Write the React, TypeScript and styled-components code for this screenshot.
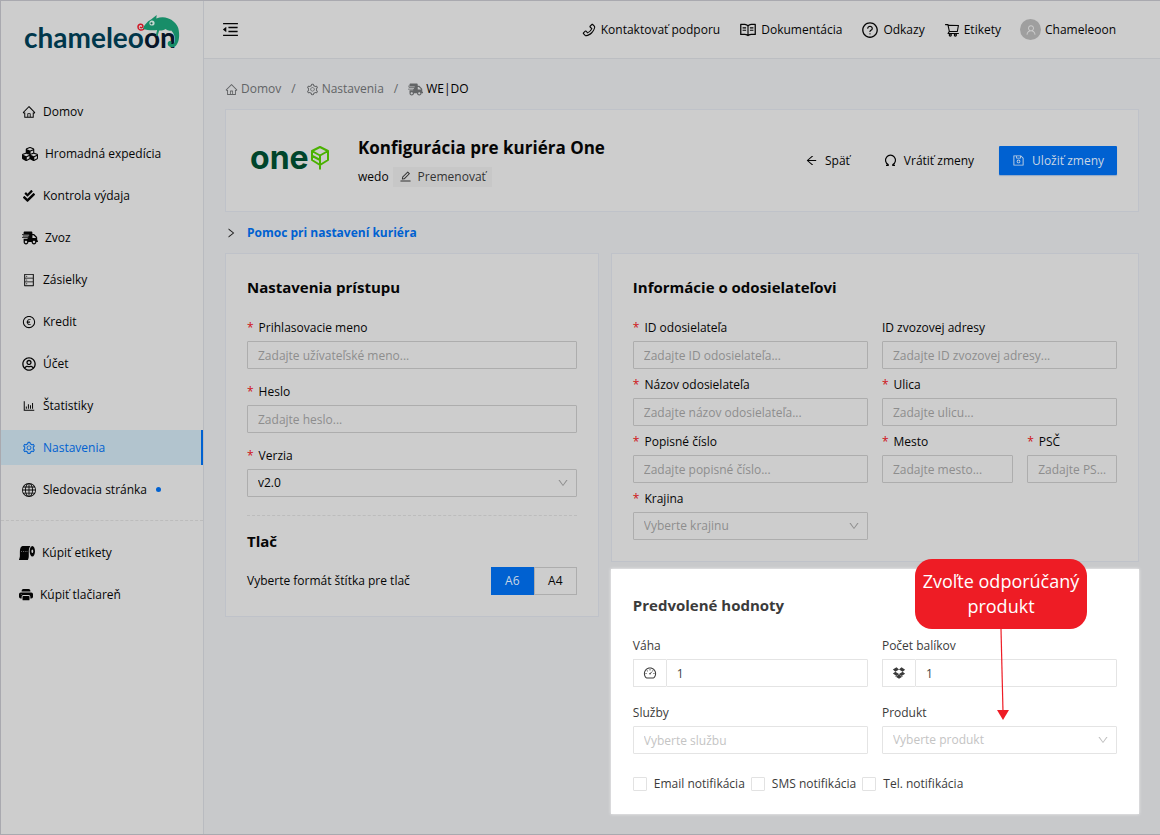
import React from 'react';
import styled, { createGlobalStyle, css } from 'styled-components';
import {
  AiOutlineHome, AiOutlineSetting, AiOutlineMenuFold, AiOutlineArrowLeft, AiOutlineSave,
  AiOutlineEdit, AiOutlineDatabase, AiOutlineEuro, AiOutlineBarChart, AiOutlinePhone,
  AiOutlineRead, AiOutlineQuestionCircle, AiOutlineShoppingCart, AiOutlineUser,
  AiOutlineDashboard, AiOutlineDropbox, AiOutlineDown, AiOutlineRight,
} from 'react-icons/ai';
import { FaCubes, FaShippingFast, FaCheckDouble, FaRegUserCircle, FaToiletPaper } from 'react-icons/fa';
import { BsGlobe, BsPrinterFill } from 'react-icons/bs';

const c = {
  page: '#c8c9cb',
  panel: '#cdcdcd',
  line: '#bfc2c9',
  inputLine: '#adadad',
  blue: '#0061d1',
  text: '#050505',
  muted: '#8d8d8d',
};

const GlobalStyle = createGlobalStyle`
  *, *::before, *::after { box-sizing: border-box; }
  body { margin: 0; background: ${c.page}; }
  body, button, input, select {
    font-family: "Open Sans", "Noto Sans", sans-serif;
    font-size: 12px;
    line-height: 20px;
    color: ${c.text};
  }
  svg { display: block; flex: none; }
  a { color: inherit; text-decoration: none; }
`;

const Page = styled.div`
  display: flex;
  min-height: 100vh;
  border: 1px solid #a9a9af;
  border-right: 0;
`;

const Sidebar = styled.aside`
  flex: none;
  width: 203px;
  background: ${c.panel};
  border-right: 1px solid #b9bbc0;
`;

const Brand = styled.a`
  display: block;
  height: 93px;
  padding: 10px 0 0 22px;
`;

const Menu = styled.nav`
  display: flex;
  flex-direction: column;
  gap: 7px;
`;

const MenuLink = styled.a<{ $active?: boolean; $inset?: number; $icon?: number }>`
  display: flex;
  align-items: center;
  gap: 7px;
  height: 35px;
  padding-left: ${p => p.$inset ?? 21}px;
  svg { min-width: 14px; font-size: ${p => p.$icon ?? 14}px; }
  ${p => p.$active && css`
    color: ${c.blue};
    background: #b2c4ce;
    border-right: 2px solid ${c.blue};
  `}
`;

const Dot = styled.span`
  width: 5px;
  height: 5px;
  margin-left: 2px;
  border-radius: 50%;
  background: ${c.blue};
`;

const DashedLine = styled.hr<{ $space: string }>`
  height: 0;
  margin: ${p => p.$space};
  border: 0;
  border-top: 1px dashed #bcbcbc;
`;

const Main = styled.div`
  flex: 1;
  min-width: 0;
`;

const TopBar = styled.header`
  display: flex;
  align-items: center;
  justify-content: space-between;
  height: 58px;
  padding: 0 44px 0 17px;
  background: ${c.panel};
  border-bottom: 1px solid #bcbec2;
`;

const IconButton = styled.button`
  padding: 0;
  border: 0;
  background: none;
  font-size: 19px;
`;

const TopLinks = styled.nav`
  display: flex;
  align-items: center;
  gap: 19px;
`;

const TopLink = styled.a<{ $icon?: number }>`
  display: flex;
  align-items: center;
  gap: 4px;
  svg { font-size: ${p => p.$icon ?? 18}px; }
`;

const Avatar = styled.span`
  display: grid;
  place-items: center;
  width: 21px;
  height: 21px;
  border-radius: 50%;
  color: ${c.panel};
  background: #9f9f9f;
`;

const Content = styled.main`
  padding: 20px 21px;
`;

const Crumbs = styled.nav`
  display: flex;
  gap: 10px;
  margin-bottom: 10px;
  color: #626466;
`;

const Crumb = styled.a<{ $current?: boolean }>`
  display: flex;
  align-items: center;
  gap: 3px;
  svg { font-size: ${p => (p.$current ? 15 : 13)}px; }
  span { color: ${p => (p.$current ? '#000' : 'inherit')}; }
`;

const Card = styled.section<{ $bright?: boolean }>`
  position: relative;
  padding: 21px;
  background: ${c.panel};
  border: 1px solid ${c.line};
  ${p => p.$bright && css`
    margin-top: 7px;
    padding: 23px 21px 19px;
    color: #3b3b3b;
    background: #fff;
    border-color: #fff;
    box-shadow: 0 0 3px #f4f4f4;
  `}
`;

const HeadCard = styled(Card)`
  display: flex;
  align-items: center;
  min-height: 103px;
  padding: 0 21px 0 24px;
`;

const CourierInfo = styled.div`
  flex: 1;
  margin-left: 28px;
`;

const Heading = styled.h1`
  margin: 0 0 6px;
  font-size: 17px;
  font-weight: 700;
  line-height: 26px;
`;

const NameRow = styled.div`
  display: flex;
  align-items: center;
  gap: 4px;
`;

const RenameButton = styled.button`
  display: flex;
  align-items: center;
  gap: 6px;
  height: 20px;
  padding: 0 6px;
  border: 0;
  color: #333;
  background: #c7c7c7;
  svg { font-size: 13px; }
`;

const Actions = styled.div`
  display: flex;
  align-items: center;
  gap: 8px;
`;

const Button = styled.button<{ $primary?: boolean }>`
  display: flex;
  align-items: center;
  gap: 7px;
  height: 29px;
  padding: 0 13px;
  border: 0;
  border-radius: 1px;
  background: none;
  svg { font-size: 13px; }
  ${p => p.$primary && css`
    margin-left: 4px;
    color: #c9d6e4;
    background: ${c.blue};
    box-shadow: 0 1px 1px #8fa8c8;
  `}
`;

const HelpToggle = styled.button`
  display: flex;
  align-items: center;
  gap: 10px;
  margin: 11px 0 10px;
  padding: 0;
  border: 0;
  background: none;
  font-weight: 700;
  color: ${c.blue};
  svg { color: #222; }
`;

const Columns = styled.div`
  display: grid;
  grid-template-columns: 5fr 7fr;
  align-items: start;
  margin: 0 -6px;
`;

const Column = styled.div`
  min-width: 0;
  padding: 0 6px;
`;

const CardTitle = styled.h2<{ $tight?: boolean }>`
  margin: 0 0 ${p => (p.$tight ? 14 : 19)}px;
  font-size: 15px;
  font-weight: 700;
  line-height: 24px;
`;

const Fields = styled.div<{ $gap: number }>`
  display: grid;
  grid-template-columns: repeat(24, minmax(0, 1fr));
  gap: ${p => p.$gap}px 14px;
`;

const FieldBox = styled.div<{ $span: number }>`
  grid-column: span ${p => p.$span};
`;

const Label = styled.label<{ $required?: boolean }>`
  display: block;
  margin-bottom: 3px;
  ${p => p.$required && css`
    &::before { content: '*'; margin-right: 5px; color: #cf1217; }
  `}
`;

const control = css<{ $bright?: boolean }>`
  display: block;
  width: 100%;
  height: 28px;
  padding: 0 4px 0 10px;
  border: 1px solid ${p => (p.$bright ? '#e4e4e4' : c.inputLine)};
  border-radius: 1px;
  outline: 0;
  background: transparent;
  text-overflow: ellipsis;
`;

const Input = styled.input<{ $bright?: boolean }>`
  ${control}
  color: ${p => (p.$bright ? '#444' : c.text)};
  &::placeholder { color: ${p => (p.$bright ? '#c4c4c4' : c.muted)}; opacity: 1; }
`;

const SelectInput = styled.select<{ $bright?: boolean; $empty?: boolean }>`
  ${control}
  appearance: none;
  color: ${p => (p.$empty ? (p.$bright ? '#c4c4c4' : c.muted) : c.text)};
`;

const SelectWrap = styled.div<{ $bright?: boolean }>`
  position: relative;
  svg {
    position: absolute;
    top: 8px;
    right: 8px;
    font-size: 12px;
    color: ${p => (p.$bright ? '#c0c0c0' : '#8f8f8f')};
    pointer-events: none;
  }
`;

const InputGroup = styled.div`
  display: flex;
`;

const Addon = styled.span`
  display: grid;
  place-items: center;
  flex: none;
  width: 33px;
  height: 28px;
  border: 1px solid #e4e4e4;
  border-right: 0;
  svg { font-size: 14px; }
`;

const PrintRow = styled.div`
  display: flex;
  align-items: center;
  justify-content: space-between;
`;

const Segments = styled.div`
  display: flex;
`;

const Segment = styled.label`
  display: grid;
  place-items: center;
  min-width: 43px;
  height: 28px;
  border: 1px solid ${c.inputLine};
  input { position: absolute; opacity: 0; }
  &:has(input:checked) {
    color: #c9d6e4;
    background: ${c.blue};
    border-color: ${c.blue};
  }
`;

const Checks = styled.div`
  display: flex;
  flex-wrap: wrap;
  gap: 6px;
  margin-top: 20px;
`;

const Check = styled.label`
  display: flex;
  align-items: center;
  gap: 7px;
  input {
    appearance: none;
    width: 14px;
    height: 14px;
    margin: 0;
    border: 1px solid #e2e2e2;
    border-radius: 1px;
  }
`;

const Callout = styled.div`
  position: absolute;
  top: -11px;
  right: 51px;
  width: 172px;
  padding: 10px 0;
  border-radius: 17px;
  color: #fff;
  background: #ee1c25;
  font-size: 18px;
  line-height: 25px;
  text-align: center;
  svg { position: absolute; top: 100%; left: 78px; }
`;

const ChameleoonLogo = () => (
  <svg width="160" height="44" viewBox="0 0 160 44" role="img" aria-label="chameleoon">
    <text x="1" y="37" fontFamily="Lato, sans-serif" fontWeight="700" fontSize="28" fill="#00374b">
      chameleo<tspan fill="#061528">on</tspan>
    </text>
    <path
      d="M120 17.5c1-3 4-7 8-9l5.700-4.500-.4 3.500c4-1.500 8-1.500 11.500-.3 5 1.500 9 5.500 10.500 10 1.500 6 1.200 13-2 17-2.500 3-7.500 2.500-8.500-.8-.6-2.500 1.400-4 3-3.200 1 .5 1 1.600.2 2.200.6 1.200 3 .8 3.700-1.400 1-3.500-.5-8.500-3.500-11.500-2 .6-4-.2-5.500-1.500-2.500 1.500-5 1.700-6.500 1.500l-1.700 5.500-1.700-.4 1.300-5.600c-4 .8-10 .2-14.100-1Z"
      fill="#178d68"
    />
    <circle cx="129" cy="12" r="2.600" fill="#c3d8cf" />
    <circle cx="128.500" cy="12.300" r="1.100" fill="#126b52" />
    <path d="M121 18c-3 2-6 1-6-2 0-3 4-4 5-1 0 2-2 2-3 1" fill="none" stroke="#cf1724" strokeWidth="1.500" />
  </svg>
);

const OneLogo = () => (
  <svg width="80" height="48" viewBox="0 -8 80 48" role="img" aria-label="one">
    <text x="0" y="24" fontFamily="Inter, sans-serif" fontWeight="700" fontSize="32" fill="#00452b">one</text>
    <g fill="none" stroke="#4ab100" strokeWidth="2" strokeLinejoin="round">
      <path d="M70 2l8 4v9l-8 5-8-5V6z M62 6l8 4.500 8-4.500 M70 10.500v14 M62.500 11l7.500 4" />
    </g>
  </svg>
);

const RevertIcon = () => (
  <svg width="1em" height="1em" viewBox="0 0 13 13" fill="none" stroke="currentColor" strokeWidth="1.2">
    <path d="M2 11.400h2.200V10.600A5 5 0 1 1 8.800 10.600V11.400H11" />
  </svg>
);

type FieldProps = {
  id: string; label: string; span: number; required?: boolean; bright?: boolean;
  placeholder?: string; options?: string[]; value?: string; icon?: React.ReactNode;
};

function Field({ id, label, span, required, bright, placeholder, options, value, icon }: FieldProps) {
  const input = <Input id={id} placeholder={placeholder} defaultValue={value} $bright={bright} />;
  return (
    <FieldBox $span={span}>
      <Label htmlFor={id} $required={required}>{label}</Label>
      {options ? (
        <SelectWrap $bright={bright}>
          <SelectInput id={id} $bright={bright} $empty={!value} defaultValue={value}>
            {options.map(o => <option key={o}>{o}</option>)}
          </SelectInput>
          <AiOutlineDown />
        </SelectWrap>
      ) : icon ? (
        <InputGroup><Addon>{icon}</Addon>{input}</InputGroup>
      ) : input}
    </FieldBox>
  );
}

export default function App() {
  return (
    <>
      <GlobalStyle />
      <Page>
        <Sidebar>
          <Brand href="#"><ChameleoonLogo /></Brand>
          <Menu>
            <MenuLink href="#"><AiOutlineHome />Domov</MenuLink>
            <MenuLink href="#" $icon={16}><FaCubes />Hromadná expedícia</MenuLink>
            <MenuLink href="#" $icon={12}><FaCheckDouble />Kontrola výdaja</MenuLink>
            <MenuLink href="#" $icon={16}><FaShippingFast />Zvoz</MenuLink>
            <MenuLink href="#"><AiOutlineDatabase />Zásielky</MenuLink>
            <MenuLink href="#"><AiOutlineEuro />Kredit</MenuLink>
            <MenuLink href="#"><FaRegUserCircle />Účet</MenuLink>
            <MenuLink href="#"><AiOutlineBarChart />Štatistiky</MenuLink>
            <MenuLink href="#" $active><AiOutlineSetting />Nastavenia</MenuLink>
            <MenuLink href="#"><BsGlobe />Sledovacia stránka<Dot /></MenuLink>
          </Menu>
          <DashedLine $space="13px 0 14px" />
          <Menu>
            <MenuLink href="#" $inset={18} $icon={16}><FaToiletPaper />Kúpiť etikety</MenuLink>
            <MenuLink href="#" $inset={18}><BsPrinterFill />Kúpiť tlačiareň</MenuLink>
          </Menu>
        </Sidebar>
        <Main>
          <TopBar>
            <IconButton aria-label="Menu"><AiOutlineMenuFold /></IconButton>
            <TopLinks>
              <TopLink href="#" $icon={16}><AiOutlinePhone />Kontaktovať podporu</TopLink>
              <TopLink href="#"><AiOutlineRead />Dokumentácia</TopLink>
              <TopLink href="#"><AiOutlineQuestionCircle />Odkazy</TopLink>
              <TopLink href="#" $icon={16}><AiOutlineShoppingCart />Etikety</TopLink>
              <TopLink href="#" $icon={12}><Avatar><AiOutlineUser /></Avatar>Chameleoon</TopLink>
            </TopLinks>
          </TopBar>
          <Content>
            <Crumbs>
              <Crumb href="#"><AiOutlineHome /><span>Domov</span></Crumb>/
              <Crumb href="#"><AiOutlineSetting /><span>Nastavenia</span></Crumb>/
              <Crumb href="#" $current><FaShippingFast /><span>WE|DO</span></Crumb>
            </Crumbs>
            <HeadCard>
              <OneLogo />
              <CourierInfo>
                <Heading>Konfigurácia pre kuriéra One</Heading>
                <NameRow>
                  wedo
                  <RenameButton><AiOutlineEdit />Premenovať</RenameButton>
                </NameRow>
              </CourierInfo>
              <Actions>
                <Button><AiOutlineArrowLeft />Späť</Button>
                <Button><RevertIcon />Vrátiť zmeny</Button>
                <Button $primary><AiOutlineSave />Uložiť zmeny</Button>
              </Actions>
            </HeadCard>
            <HelpToggle><AiOutlineRight />Pomoc pri nastavení kuriéra</HelpToggle>
            <Columns>
              <Column>
                <Card>
                  <CardTitle>Nastavenia prístupu</CardTitle>
                  <Fields $gap={13}>
                    <Field id="login" span={24} required label="Prihlasovacie meno" placeholder="Zadajte užívateľské meno..." />
                    <Field id="password" span={24} required label="Heslo" placeholder="Zadajte heslo..." />
                    <Field id="version" span={24} required label="Verzia" options={['v2.0']} value="v2.0" />
                  </Fields>
                  <DashedLine $space="18px 0 13px" />
                  <CardTitle $tight>Tlač</CardTitle>
                  <PrintRow>
                    <span id="format">Vyberte formát štítka pre tlač</span>
                    <Segments role="radiogroup" aria-labelledby="format">
                      <Segment><input type="radio" name="format" defaultChecked />A6</Segment>
                      <Segment><input type="radio" name="format" />A4</Segment>
                    </Segments>
                  </PrintRow>
                </Card>
              </Column>
              <Column>
                <Card>
                  <CardTitle>Informácie o odosielateľovi</CardTitle>
                  <Fields $gap={6}>
                    <Field id="sender" span={12} required label="ID odosielateľa" placeholder="Zadajte ID odosielateľa..." />
                    <Field id="pickup" span={12} label="ID zvozovej adresy" placeholder="Zadajte ID zvozovej adresy..." />
                    <Field id="name" span={12} required label="Názov odosielateľa" placeholder="Zadajte názov odosielateľa..." />
                    <Field id="street" span={12} required label="Ulica" placeholder="Zadajte ulicu..." />
                    <Field id="number" span={12} required label="Popisné číslo" placeholder="Zadajte popisné číslo..." />
                    <Field id="city" span={7} required label="Mesto" placeholder="Zadajte mesto..." />
                    <Field id="zip" span={5} required label="PSČ" placeholder="Zadajte PSČ..." />
                    <Field id="country" span={12} required label="Krajina" options={['Vyberte krajinu']} />
                  </Fields>
                </Card>
                <Card $bright>
                  <CardTitle>Predvolené hodnoty</CardTitle>
                  <Fields $gap={16}>
                    <Field id="weight" span={12} bright label="Váha" value="1" icon={<AiOutlineDashboard />} />
                    <Field id="count" span={12} bright label="Počet balíkov" value="1" icon={<AiOutlineDropbox />} />
                    <Field id="services" span={12} bright label="Služby" placeholder="Vyberte službu" />
                    <Field id="product" span={12} bright label="Produkt" options={['Vyberte produkt']} />
                  </Fields>
                  <Checks>
                    <Check><input type="checkbox" />Email notifikácia</Check>
                    <Check><input type="checkbox" />SMS notifikácia</Check>
                    <Check><input type="checkbox" />Tel. notifikácia</Check>
                  </Checks>
                  <Callout>
                    Zvoľte odporúčaný produkt
                    <svg width="16" height="92" viewBox="0 0 16 92">
                      <path d="M8 0l2 83" stroke="#ee1c25" strokeWidth="1.2" />
                      <path d="M4 81h12l-6 10z" fill="#ee1c25" />
                    </svg>
                  </Callout>
                </Card>
              </Column>
            </Columns>
          </Content>
        </Main>
      </Page>
    </>
  );
}
